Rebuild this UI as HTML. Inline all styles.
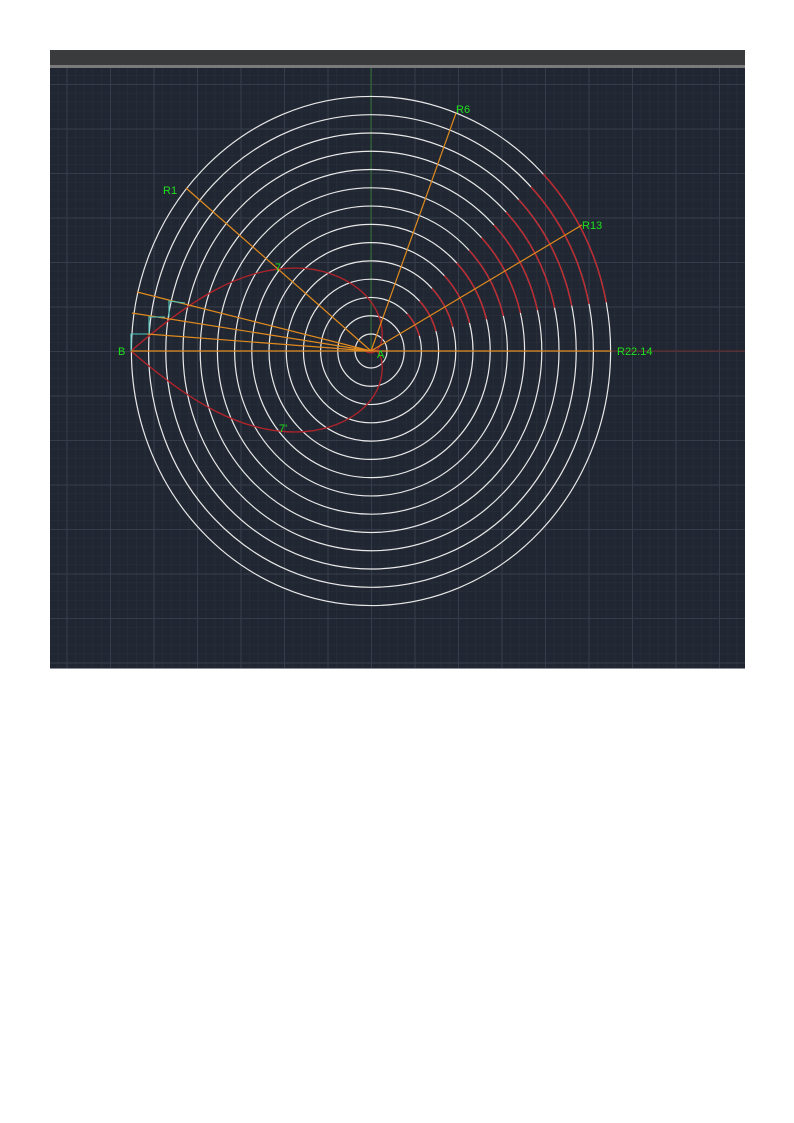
<!DOCTYPE html>
<html><head><meta charset="utf-8"><style>
html,body{margin:0;padding:0;background:#fff;width:794px;height:1123px;overflow:hidden}
svg{position:absolute;left:0;top:0}
text{font-family:"Liberation Sans",sans-serif;font-size:11px;fill:#1ee01e}
</style></head><body>
<svg width="794" height="1123" viewBox="0 0 794 1123">
<defs>
<pattern id="minor" x="371" y="351" width="8.7" height="8.9" patternUnits="userSpaceOnUse">
<path d="M0 0V8.9M0 0H8.7" stroke="#2a303b" stroke-width="1" fill="none"/>
</pattern>
<pattern id="major" x="371" y="351" width="43.5" height="44.5" patternUnits="userSpaceOnUse">
<path d="M0.5 0V44.5M0 0.5H43.5" stroke="#363c49" stroke-width="1" fill="none"/>
</pattern>
<clipPath id="c"><rect x="50" y="68" width="695" height="601"/></clipPath>
</defs>
<rect x="50" y="50" width="695" height="619" fill="#212732"/>
<g clip-path="url(#c)">
<rect x="50" y="68" width="695" height="601" fill="url(#minor)"/>
<rect x="50" y="68" width="695" height="601" fill="url(#major)"/>
<line x1="371" y1="68" x2="371" y2="351" stroke="#2f6b33" stroke-width="1"/>
<line x1="371" y1="351" x2="745" y2="351" stroke="#6b2a2a" stroke-width="1"/>
</g>
<rect x="50" y="50" width="695" height="15" fill="#3a3b3d"/>
<rect x="50" y="65" width="695" height="3" fill="#7a7a7a"/>
<rect x="50" y="668" width="695" height="1" fill="#8a8f98"/>
<g transform="translate(371 351) scale(1 1.0625)">
<g fill="none" stroke="#e8e8e8" stroke-width="1.2" id="circles">
<circle r="16" vector-effect="non-scaling-stroke"/><circle r="33.2" vector-effect="non-scaling-stroke"/><circle r="50.4" vector-effect="non-scaling-stroke"/>
<circle r="67.6" vector-effect="non-scaling-stroke"/><circle r="84.8" vector-effect="non-scaling-stroke"/><circle r="102" vector-effect="non-scaling-stroke"/>
<circle r="119.2" vector-effect="non-scaling-stroke"/><circle r="136.4" vector-effect="non-scaling-stroke"/><circle r="153.6" vector-effect="non-scaling-stroke"/>
<circle r="170.8" vector-effect="non-scaling-stroke"/><circle r="188" vector-effect="non-scaling-stroke"/><circle r="205.2" vector-effect="non-scaling-stroke"/>
<circle r="222.4" vector-effect="non-scaling-stroke"/><circle r="239.6" vector-effect="non-scaling-stroke"/>
</g>
<g fill="none" stroke="#c0272d" stroke-width="1.4" id="red"></g>
</g>
<path d="M131 351 C190 300 240 268 295 268 C345 268 385 300 382 338 C381 352 370 356 364 350 M131 351 C190 402 240 432 295 432 C345 432 385 402 382 364 C381 350 372 346 366 352" fill="none" stroke="#b3232a" stroke-width="1.3"/>
<g stroke="#e08a1e" stroke-width="1.2">
<line x1="371" y1="351" x2="186" y2="188"/>
<line x1="371" y1="351" x2="456" y2="113"/>
<line x1="371" y1="351" x2="582" y2="225"/>
<line x1="371" y1="351" x2="611" y2="351"/>
<line x1="371" y1="351" x2="131" y2="351"/>
<line x1="371" y1="351" x2="137" y2="292"/>
<line x1="371" y1="351" x2="132" y2="313"/>
<line x1="371" y1="351" x2="147" y2="334"/>
</g>
<g stroke="#4fc8c0" stroke-width="1.1" fill="none">
<path d="M147 334H131V351"/><path d="M165 317H149V334"/><path d="M185 303L169 301V317"/>
</g>
<text x="163" y="194">R1</text>
<text x="456" y="113">R6</text>
<text x="582" y="229">R13</text>
<text x="617" y="355">R22.14</text>
<text x="118" y="355">B</text>
<text x="279" y="432">7'</text>
<text x="275" y="271" font-size="9">7</text>
<text x="377" y="358" font-size="7">A</text>
</svg>
<script>
(function(){
var g=document.getElementById('red');
for(var k=2;k<14;k++){var r=16+17.2*k;
var a0=(11+ (13-k)*0.5)*Math.PI/180,a1=(44)*Math.PI/180;
var x0=r*Math.cos(a0),y0=-r*Math.sin(a0),x1=r*Math.cos(a1),y1=-r*Math.sin(a1);
var p=document.createElementNS('http://www.w3.org/2000/svg','path');
p.setAttribute('vector-effect','non-scaling-stroke');
p.setAttribute('d','M'+x0+' '+y0+' A'+r+' '+r+' 0 0 0 '+x1+' '+y1);g.appendChild(p);}
})();
</script>
</body></html>
